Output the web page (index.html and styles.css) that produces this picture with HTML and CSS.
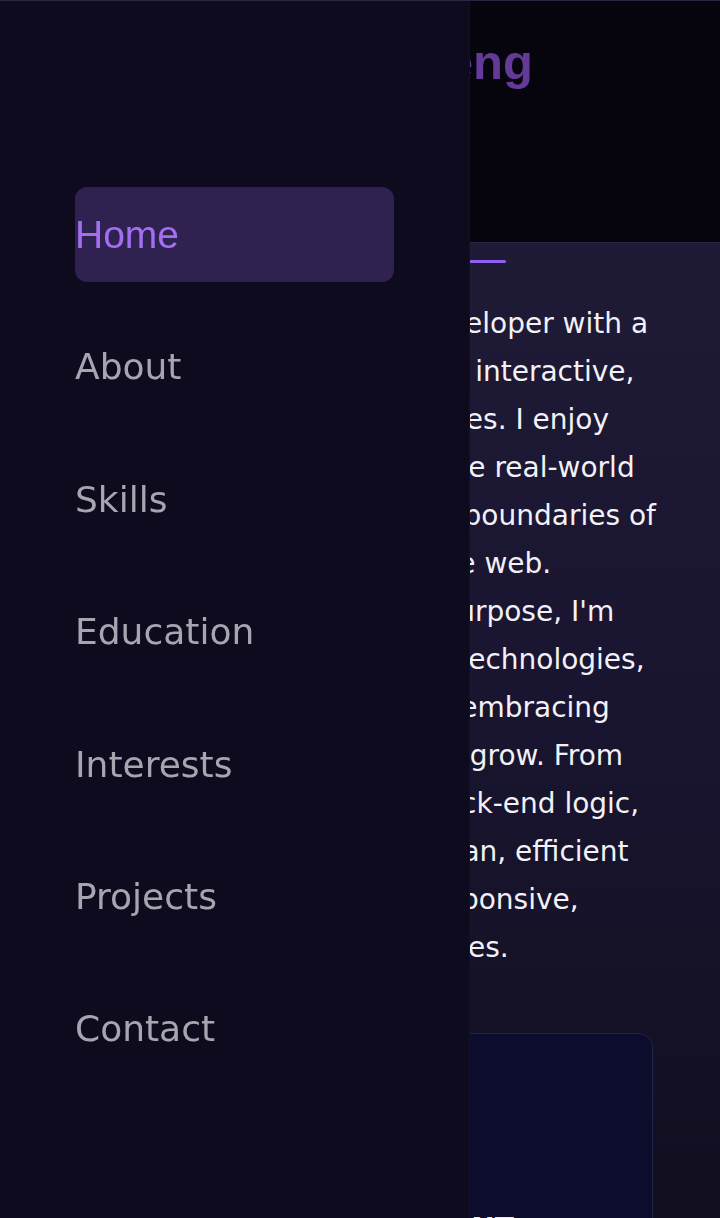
FILE: index.html
```html
<!DOCTYPE html>
<html lang="en">
<head>
<meta charset="utf-8">
<title>Andrew Cheng</title>
<link rel="stylesheet" href="styles.css">
</head>
<body>
  <div class="page">
    <header class="hero">
      <h1 class="brand">Andrew Cheng</h1>
    </header>
    <section class="about">
      <div class="bar"></div>
      <p class="bio">Hi, I am a full-stack web developer with a<br>a strong passion for building interactive,<br>fast and user-friendly websites. I enjoy<br>designing solutions that solve real-world<br>problems while pushing the boundaries of<br>what is really possible on the web.<br>Driven by creativity and a purpose, I'm<br>constantly exploring newer technologies,<br>developing more skills, and embracing<br>the challenges that help me grow. From<br>sleek front-end design to back-end logic,<br>I always focus on writing clean, efficient<br>code while creating fully responsive,<br>and highly accessible websites.</p>
      <div class="card">
        <div class="card-media"></div>
        <h3 class="card-title">SOFTWARE DEVELOPMENT</h3>
      </div>
    </section>
  </div>
  <nav class="drawer">
    <ul class="menu">
      <li><a class="item active" href="#home">Home</a></li>
      <li><a class="item" href="#about">About</a></li>
      <li><a class="item" href="#skills">Skills</a></li>
      <li><a class="item" href="#education">Education</a></li>
      <li><a class="item" href="#interests">Interests</a></li>
      <li><a class="item" href="#projects">Projects</a></li>
      <li><a class="item" href="#contact">Contact</a></li>
    </ul>
  </nav>
</body>
</html>
```
FILE: styles.css
```css
html, body {
  height: 100%;
}
body {
  margin: 0;
  border-top: 1px solid #2b2741;
  background: #06050d;
  overflow: hidden;
  font-family: "DejaVu Sans", sans-serif;
  box-sizing: border-box;
}
.page {
  display: flex;
  flex-direction: column;
}
.hero {
  height: 241px;
  box-sizing: border-box;
  padding-top: 31px;
  background: #06050d;
}
.brand {
  margin: 0;
  font-family: "Liberation Sans", Arial, sans-serif;
  font-weight: 700;
  font-size: 49px;
  line-height: 60px;
  text-align: center;
  color: #633a98;
}
.about {
  border-top: 1px solid #29243f;
  padding: 17px 67px 0;
  background: linear-gradient(180deg, #1f1a36 0%, #191530 45%, #110e1e 100%);
  min-height: 1000px;
}
.bar {
  width: 292px;
  height: 3px;
  margin: 0 auto;
  border-radius: 2px;
  background: #8f5ef2;
}
.bio {
  margin: 37px 0 0;
  font-size: 28px;
  line-height: 48px;
  color: #f2f1f6;
  white-space: nowrap;
}
.card {
  margin-top: 61px;
  padding: 28px;
  background: #0c0c2c;
  border: 1px solid #23224a;
  border-radius: 14px;
}
.card-media {
  height: 150px;
}
.card-title {
  margin: 0;
  font-size: 28px;
  line-height: 34px;
  font-weight: 700;
  color: #e8e6f2;
  white-space: nowrap;
}
.drawer {
  position: fixed;
  top: 1px;
  left: 0;
  bottom: 0;
  width: 469px;
  background: #0e0b1f;
  box-shadow: 1px 0 0 #131027;
}
.menu {
  list-style: none;
  margin: 0;
  padding: 186px 75px 0;
  display: flex;
  flex-direction: column;
  gap: 37.4px;
}
.item {
  display: flex;
  align-items: center;
  height: 95px;
  border-radius: 12px;
  color: #a9a5b0;
  font-family: "DejaVu Sans", sans-serif;
  font-size: 36px;
  text-decoration: none;
}
.item.active {
  background: #2f2150;
  color: #a36ef0;
  font-family: "Liberation Sans", Arial, sans-serif;
  font-size: 39px;
}
```
